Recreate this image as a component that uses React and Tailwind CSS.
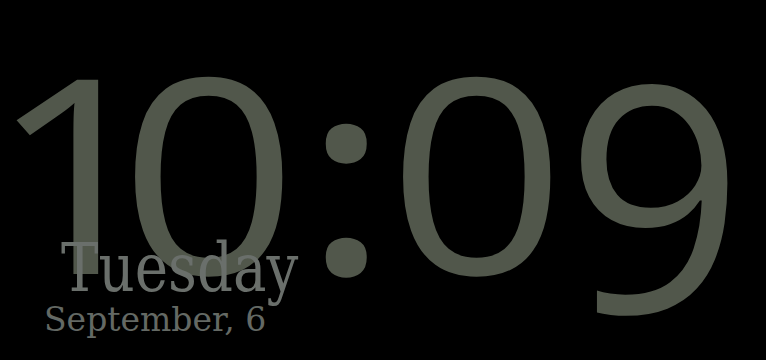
import React from "react";

const Digit = ({ box, children, glyph = "inline-block scale-x-[1.15]" }) => (
  <div className={`${box} flex justify-center`}>
    <span className={glyph}>{children}</span>
  </div>
);

const App = () => {
  return (
    <div className="relative h-[360px] w-full overflow-hidden bg-black">
      {/* time */}
      <div
        className="flex pl-[28px] pt-[33px] text-[272px] leading-none text-[#51574b]"
        style={{ fontFamily: '"Open Sans", sans-serif' }}
      >
        <Digit box="w-[100px]">1</Digit>
        <Digit box="w-[162px]">0</Digit>
        <Digit box="w-[112px]" glyph="inline-block font-semibold scale-x-[1.05]">
          :
        </Digit>
        <Digit box="w-[150px]">0</Digit>
        <Digit
          box="w-[206px]"
          glyph="inline-block origin-top scale-x-[1.15] scale-y-[1.16]"
        >
          9
        </Digit>
      </div>

      {/* date sits over the clock */}
      <div
        className="absolute left-[44px] top-[235px] flex flex-col"
        style={{ fontFamily: '"DejaVu Serif", serif' }}
      >
        <span className="ml-[17px] inline-block origin-left scale-x-[0.84] text-[67px] leading-none text-[#6a6f6b]">
          Tuesday
        </span>
        <span className="mt-[1px] text-[33px] leading-none text-[#646964]">
          September, 6
        </span>
      </div>
    </div>
  );
};

export default App;
